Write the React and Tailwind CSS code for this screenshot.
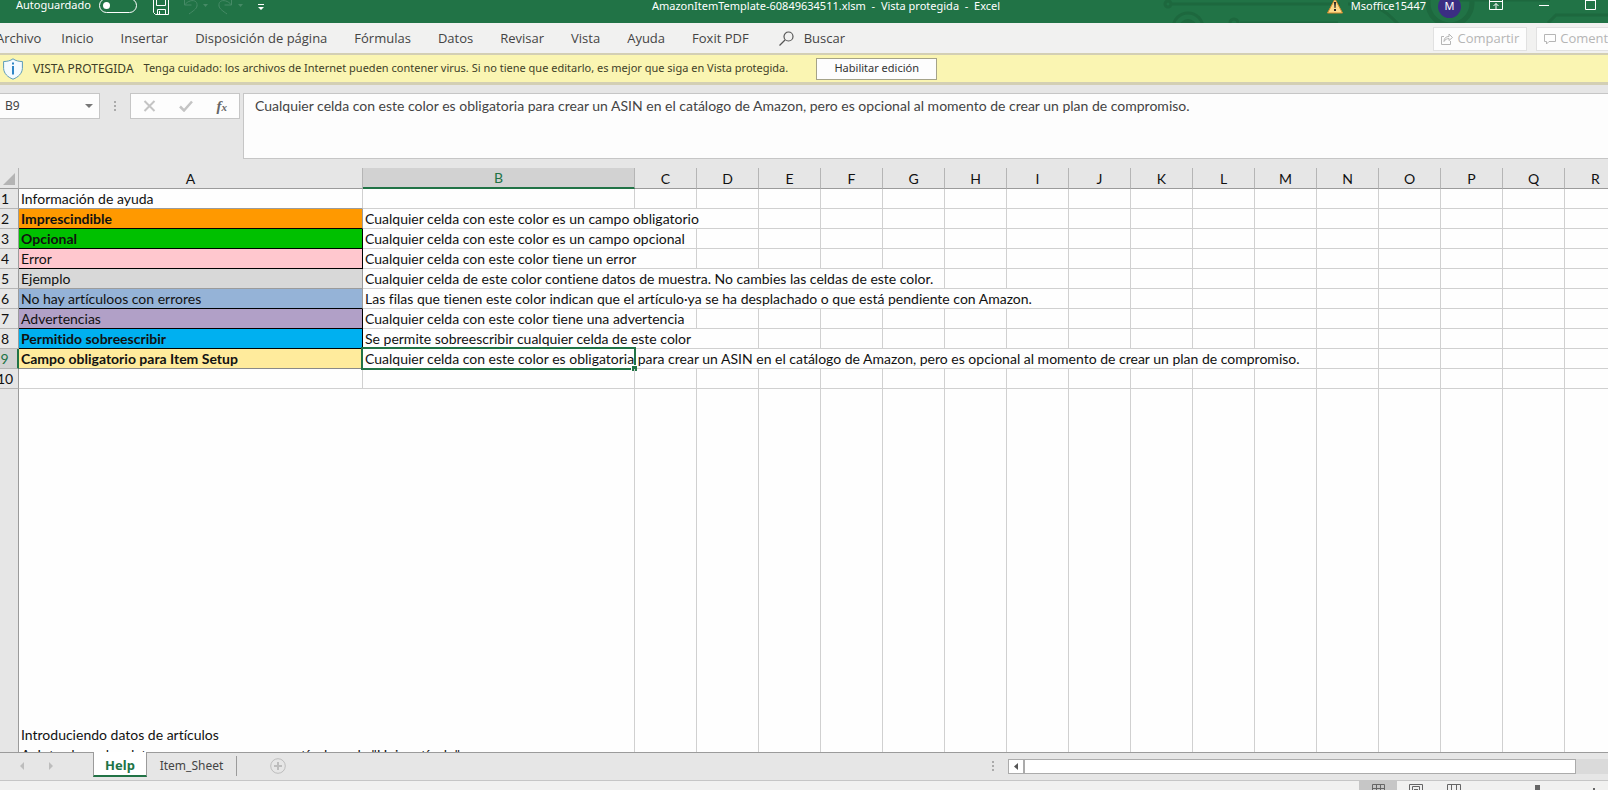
import React, { useState } from "react";

const menuTabs = ["Inicio", "Insertar", "Disposición de página", "Fórmulas", "Datos", "Revisar", "Vista", "Ayuda", "Foxit PDF"];

const columns = ["C", "D", "E", "F", "G", "H", "I", "J", "K", "L", "M", "N", "O", "P", "Q", "R"];

const longText =
  "Cualquier celda con este color es obligatoria para crear un ASIN en el catálogo de Amazon, pero es opcional al momento de crear un plan de compromiso.";

// span = how many columns the text of column B flows over
const rows = [
  { a: "Información de ayuda", aClass: "border-b-[#9b9b9b] border-r-[#d0d0d0]", b: "", span: 1 },
  { a: "Imprescindible", aClass: "bg-[#ff9900] font-bold border-b-black border-r-[#9b9b9b]", b: "Cualquier celda con este color es un campo obligatorio", span: 3 },
  { a: "Opcional", aClass: "bg-[#00c000] font-bold border-black", b: "Cualquier celda con este color es un campo opcional", span: 2 },
  { a: "Error", aClass: "bg-[#ffc7ce] border-black", b: "Cualquier celda con este color tiene un error", span: 2 },
  { a: "Ejemplo", aClass: "bg-[#d8d8d8] border-[#9b9b9b]", b: "Cualquier celda de este color contiene datos de muestra. No cambies las celdas de este color.", span: 6 },
  { a: "No hay artículoos con errores", aClass: "bg-[#95b3d7] border-b-black border-r-[#9b9b9b]", b: "Las filas que tienen este color indican que el artículo·ya se ha desplachado o que está pendiente con Amazon.", span: 8 },
  { a: "Advertencias", aClass: "bg-[#b1a0c7] border-black", b: "Cualquier celda con este color tiene una advertencia", span: 2 },
  { a: "Permitido sobreescribir", aClass: "bg-[#00b0f0] font-bold border-black", b: "Se permite sobreescribir cualquier celda de este color", span: 3 },
  { a: "Campo obligatorio para Item Setup", aClass: "bg-[#ffeb9c] font-bold border-[#8a8a8a]", b: longText, span: 12, selected: true },
  { a: "", aClass: "border-[#d0d0d0]", b: "", span: 1 },
];

const TitleBar = () => {
  const [autoSave, setAutoSave] = useState(false);

  return (
    <header className="relative flex h-[23px] shrink-0 items-center justify-between overflow-hidden bg-[#217346] text-[11px] text-white">
      <svg className="absolute top-0 right-0 h-[23px] w-[448px]" viewBox="0 0 448 23" fill="none" stroke="#1d683e" strokeWidth="3">
        <circle cx="8" cy="4" r="3" />
        <path d="M12 4h168" />
        <circle cx="28" cy="28" r="15" />
        <circle cx="28" cy="28" r="7" strokeWidth="4" />
        <circle cx="74" cy="23" r="4" />
        <path d="M80 23h98M188 4c22 0 32 2 44 14l8 8" />
        <circle cx="290" cy="3" r="22" strokeWidth="5" />
        <path d="M388 23l8-8h52M300 0h90" />
      </svg>

      <div className="relative flex h-full items-center pl-4">
        <label htmlFor="autosave" className="-mt-3">Autoguardado</label>
        <div className="relative ml-2 -mt-3 h-[15px] w-[38px]">
          <input
            id="autosave"
            type="checkbox"
            checked={autoSave}
            onChange={() => setAutoSave(!autoSave)}
            className="peer block h-[15px] w-[38px] appearance-none rounded-full border border-white"
          />
          <span className="pointer-events-none absolute top-1 left-1 size-[7px] rounded-full bg-white peer-checked:left-6" />
        </div>
        <button aria-label="Guardar" className="ml-4">
          <svg className="block h-[23px] w-4" viewBox="0 0 16 23" fill="none" stroke="#fff">
            <path d="M.5-1v13.500l2 2h13V-1M3.500-1v6.500h9V-1M4.500 14.500v-5h8v5M6.500 11v3" />
          </svg>
        </button>
        <button aria-label="Deshacer" className="ml-3">
          <svg className="block h-[23px] w-7" viewBox="0 0 28 23" fill="none" stroke="#468a66">
            <path d="M3.500-1v6h7M3.500 5C8-1 17-1 16 6c-.5 3-4 5-8 8" />
            <path d="M22 4h5l-2.500 3z" fill="#468a66" stroke="none" />
          </svg>
        </button>
        <button aria-label="Rehacer" className="ml-2">
          <svg className="block h-[23px] w-7" viewBox="0 0 28 23" fill="none" stroke="#468a66">
            <path d="M14.500-1v6h-7M14.500 5C10-1 1-1 2 6c.5 3 4 5 8 8" />
            <path d="M21 4h5l-2.500 3z" fill="#468a66" stroke="none" />
          </svg>
        </button>
        <button aria-label="Personalizar barra" className="ml-3">
          <svg className="block h-[23px] w-2" viewBox="0 0 8 23" fill="#fff">
            <path d="M1 4h6v1H1zM1 7h6L4 10z" />
          </svg>
        </button>
      </div>

      <h1 className="absolute inset-x-0 top-0 -mt-1 pl-11 text-center leading-5 whitespace-pre">
        AmazonItemTemplate-60849634511.xlsm  -  Vista protegida  -  Excel
      </h1>

      <div className="relative flex h-full items-start">
        <svg className="h-[14px] w-4" viewBox="0 0 16 14">
          <path d="M8-1L15.500 13H.5z" fill="#fbd989" stroke="#d88a2c" />
          <path d="M7 2h2l-.5 6h-1zM7 9h2v2H7z" fill="#222" />
        </svg>
        <span className="ml-2 -mt-1 leading-5">Msoffice15447</span>
        <span className="-mt-[5px] ml-3 flex size-[23px] items-center justify-center rounded-full bg-[#3b2e83]">M</span>
        <button aria-label="Opciones de cinta" className="ml-7">
          <svg className="block h-3 w-[14px]" viewBox="0 0 14 12" fill="none" stroke="#fff">
            <path d="M.5-1v10.500h13V-1M0 1.500h14M7 9V3.500M4.500 6L7 3.500 9.500 6" />
          </svg>
        </button>
        <button aria-label="Minimizar" className="ml-9">
          <svg className="block h-3 w-[10px]" viewBox="0 0 10 12" stroke="#fff">
            <path d="M0 5.500h10" />
          </svg>
        </button>
        <button aria-label="Maximizar" className="mr-3 ml-9">
          <svg className="block h-3 w-[11px]" viewBox="0 0 11 12" fill="none" stroke="#fff">
            <path d="M.5 0v9.500h10V0M.5.5h10" />
          </svg>
        </button>
      </div>
    </header>
  );
};

const Ribbon = () => (
  <div className="flex h-[30px] shrink-0 items-center justify-between overflow-hidden bg-[#f1f1f0] pt-px font-['Open_Sans',sans-serif] text-[13px] text-[#444]">
    <nav className="-ml-1 flex items-center whitespace-nowrap">
      <a href="#archivo" className="mr-5">Archivo</a>
      <div className="flex gap-[27px]">
        {menuTabs.map((tab) => (
          <a key={tab} href={`#${tab}`}>{tab}</a>
        ))}
      </div>
      <button className="ml-[30px] flex items-center gap-[10px]">
        <svg className="size-[15px]" viewBox="0 0 15 15" fill="none" stroke="#555" strokeWidth="1.200">
          <circle cx="9.500" cy="5.500" r="4.500" />
          <path d="M6 9l-5.500 5.500" />
        </svg>
        Buscar
      </button>
    </nav>
    <div className="-mr-[38px] flex gap-[9px] text-[#b5b5b5]">
      <button className="flex h-6 items-center gap-1 border border-[#e1e1e1] bg-[#fdfdfd] px-[7px]">
        <svg className="size-3" viewBox="0 0 12 12" fill="none" stroke="#b5b5b5">
          <path d="M3 3.500H.5v8h9V8M3 8.500C3 5 5 3.500 8 3.500V1l3.500 3.500L8 7.500V5.500C6 5.500 4 6.500 3 8.500z" />
        </svg>
        Compartir
      </button>
      <button className="flex h-6 items-center gap-1 border border-[#e1e1e1] bg-[#fdfdfd] px-[7px]">
        <svg className="size-3" viewBox="0 0 12 12" fill="none" stroke="#b5b5b5">
          <path d="M.5 1.500h11v7H5l-2.500 2.500V8.500h-2z" />
        </svg>
        Comentarios
      </button>
    </div>
  </div>
);

const ProtectedBar = () => (
  <div className="flex h-8 shrink-0 items-center border-t-2 border-b-3 border-[#d3cfb4] bg-[#faf5b2] pl-[3px] text-[#3f3f28]">
    <svg className="h-[22px] w-5 shrink-0" viewBox="0 0 20 22" fill="#f4fbff" stroke="#5b9bb8">
      <path d="M10 .8C7.500 2.800 4 3.500.6 3.500v7C1 15.500 4.500 19 10 21.200c5.500-2.200 9-5.700 9.400-10.700v-7C16 3.500 12.500 2.800 10 .8z" />
      <path d="M10 8v8.500M10 4.500v2" stroke="#2f86c6" strokeWidth="2" />
    </svg>
    <span className="ml-[10px] text-xs whitespace-nowrap">VISTA PROTEGIDA</span>
    <span className="ml-[10px] text-[11px] whitespace-nowrap">
      Tenga cuidado: los archivos de Internet pueden contener virus. Si no tiene que editarlo, es mejor que siga en Vista protegida.
    </span>
    <button className="ml-7 h-[22px] w-[121px] border border-[#a5a389] bg-[#fdfdfd] text-[11px] text-[#333]">Habilitar edición</button>
  </div>
);

const FormulaBar = () => (
  <div className="flex h-[83px] shrink-0 items-start bg-[#e6e6e6] pt-2">
    <div className="flex h-[26px] w-[100px] items-center border border-l-0 border-[#c6c6c6] bg-[#fdfdfd] pr-[6px] pl-[5px]">
      <input aria-label="Cuadro de nombres" defaultValue="B9" className="w-full min-w-0 text-xs text-[#444] outline-none" />
      <svg className="h-1 w-2 shrink-0" viewBox="0 0 8 4" fill="#777">
        <path d="M0 0h8L4 4z" />
      </svg>
    </div>
    <svg className="mx-[14px] mt-2 h-[11px] w-[2px]" viewBox="0 0 2 11" fill="#aaa">
      <path d="M0 0h2v2H0zM0 4h2v2H0zM0 8h2v2H0z" />
    </svg>
    <div className="flex h-[26px] w-[110px] items-center justify-between border border-[#c6c6c6] bg-[#fdfdfd] px-3">
      <button aria-label="Cancelar">
        <svg className="h-3 w-[13px]" viewBox="0 0 13 12" stroke="#c4c4c4" strokeWidth="2">
          <path d="M1.500 1l10 10M11.500 1l-10 10" />
        </svg>
      </button>
      <button aria-label="Introducir">
        <svg className="h-3 w-[14px]" viewBox="0 0 14 12" fill="none" stroke="#c4c4c4" strokeWidth="2.500">
          <path d="M1 6.500l4 4L13 1.500" />
        </svg>
      </button>
      <button className="font-['Liberation_Serif',serif] text-[15px] leading-5 font-bold text-[#666] italic">
        f<span className="text-[11px]">x</span>
      </button>
    </div>
    <div className="ml-[3px] h-[66px] flex-1 border border-r-0 border-[#c6c6c6] bg-[#fdfdfd]">
      <textarea
        aria-label="Barra de fórmulas"
        defaultValue={longText}
        className="block h-full w-full resize-none px-[11px] pt-[2px] font-['Lato',sans-serif] text-[14px] leading-5 text-[#444] outline-none [font-variant-ligatures:none]"
      />
    </div>
  </div>
);

const headCell = "border-r border-b border-r-[#b5b5b5] border-b-[#9b9b9b] p-0 pt-[2px] text-center font-normal";
const gridCell = "border-r border-b border-[#d0d0d0] p-0";

const Sheet = () => (
  <main className="min-h-0 flex-1 overflow-hidden bg-[#fefefe]">
    <table className="-ml-2 w-[1635px] table-fixed border-separate border-spacing-0 font-['Lato',sans-serif] text-[14px] leading-[18px] text-[#111] [font-variant-ligatures:none]">
      <colgroup>
        <col className="w-[27px]" />
        <col className="w-[344px]" />
        <col className="w-[272px]" />
        {columns.map((c) => (
          <col key={c} className="w-[62px]" />
        ))}
      </colgroup>
      <thead>
        <tr className="h-[21px] bg-[#e6e6e6]">
          <th className={headCell}>
            <svg aria-label="Seleccionar todo" className="ml-[11px] size-3" viewBox="0 0 12 12" fill="#b4b4b4">
              <path d="M12 0v12H0z" />
            </svg>
          </th>
          <th className={headCell}>A</th>
          <th className="border-r border-b-2 border-r-[#b5b5b5] border-b-[#217346] bg-[#d2d2d2] p-0 pt-px text-center font-normal text-[#217346]">B</th>
          {columns.map((c) => (
            <th key={c} className={headCell}>{c}</th>
          ))}
        </tr>
      </thead>
      <tbody>
        {rows.map((row, i) => (
          <tr key={i} className="h-5">
            <th
              className={
                row.selected
                  ? "border-r-2 border-b border-r-[#217346] border-b-[#b5b5b5] bg-[#d2d2d2] p-0 text-center font-normal text-[#217346]"
                  : "border-r border-b border-r-[#9b9b9b] border-b-[#b5b5b5] bg-[#e6e6e6] p-0 text-center font-normal"
              }
            >
              {i + 1}
            </th>
            <td className={`border-r border-b p-0 pl-[2px] whitespace-nowrap ${row.aClass}`}>{row.a}</td>
            <td colSpan={row.span} className={`${gridCell} relative pl-[2px] whitespace-nowrap`}>
              {row.b}
              {row.selected && (
                <span className="absolute -top-[2px] -left-[2px] h-[23px] w-[275px] border-2 border-[#217346]">
                  <span className="absolute -right-[3px] -bottom-[3px] size-[6px] border-t border-l border-white bg-[#217346]" />
                </span>
              )}
            </td>
            {columns.slice(row.span - 1).map((c) => (
              <td key={c} className={gridCell} />
            ))}
          </tr>
        ))}
        <tr className="h-[545px]">
          <th className="border-r border-[#9b9b9b] bg-[#e6e6e6] p-0" />
          <td colSpan={2} className="border-r border-[#d0d0d0] p-0 pt-[336px] pl-[2px] align-top leading-5">
            <p>Introduciendo datos de artículos</p>
            <p>A. Introduzca los datos para crear un nuevo artículo en la "Hoja artículo"</p>
          </td>
          {columns.map((c) => (
            <td key={c} className="border-r border-[#d0d0d0]" />
          ))}
        </tr>
      </tbody>
    </table>
  </main>
);

const SheetTabs = () => (
  <div className="flex h-[29px] shrink-0 items-start border-y border-t-[#9b9b9b] border-b-[#c6c6c6] bg-[#e6e6e6] text-xs">
    <button aria-label="Anterior" className="mt-[9px] ml-5">
      <svg className="block h-2 w-1" viewBox="0 0 4 8" fill="#bdbdbd"><path d="M4 0v8L0 4z" /></svg>
    </button>
    <button aria-label="Siguiente" className="mt-[9px] ml-[25px]">
      <svg className="block h-2 w-1" viewBox="0 0 4 8" fill="#bdbdbd"><path d="M0 0v8l4-4z" /></svg>
    </button>
    <button className="-mt-px ml-10 h-[25px] w-[54px] border-x border-b-2 border-x-[#9b9b9b] border-b-[#217346] bg-white pt-1 text-[13px] font-bold text-[#217346]">
      Help
    </button>
    <button className="mt-[3px] h-5 w-[90px] border-r border-[#9b9b9b] text-[#444]">Item_Sheet</button>
    <button aria-label="Hoja nueva" className="mt-[5px] ml-[33px]">
      <svg className="block size-4" viewBox="0 0 16 16" fill="none" stroke="#bdbdbd">
        <circle cx="8" cy="8" r="7.300" />
        <path d="M8 4v8M4 8h8" strokeWidth="2" />
      </svg>
    </button>
    <div className="ml-auto flex w-[616px] items-start pt-[6px]">
      <svg className="mt-[2px] mr-[14px] h-[10px] w-[2px]" viewBox="0 0 2 10" fill="#aaa">
        <path d="M0 0h2v2H0zM0 4h2v2H0zM0 8h2v2H0z" />
      </svg>
      <div className="flex h-[15px] flex-1 bg-[#dadada]">
        <button aria-label="Desplazar a la izquierda" className="flex w-[15px] items-center justify-center border border-r-0 border-[#ababab] bg-white">
          <svg className="h-[7px] w-1" viewBox="0 0 4 7" fill="#555"><path d="M4 0v7L0 3.500z" /></svg>
        </button>
        <div className="mr-8 flex-1 border border-l-2 border-[#ababab] bg-white" />
      </div>
    </div>
  </div>
);

const StatusBar = () => (
  <footer className="flex h-[9px] shrink-0 items-start justify-end overflow-hidden bg-[#f1f1f0]">
    <button aria-label="Normal" className="flex h-[9px] w-[38px] items-start justify-center bg-[#c6c6c6] pt-[3px]">
      <svg className="h-[14px] w-[13px] shrink-0" viewBox="0 0 13 14" fill="none" stroke="#666">
        <path d="M.5.5h12v12H.5zM4.500 0v13M8.500 0v13M0 4.500h13M0 8.500h13" />
      </svg>
    </button>
    <button aria-label="Diseño de página" className="flex h-[9px] w-[38px] items-start justify-center pt-[3px]">
      <svg className="h-[14px] w-[14px] shrink-0" viewBox="0 0 14 14" fill="none" stroke="#666">
        <path d="M.5.5h13v13H.5zM3.500 14V2.500h7V14M5 5.500h4" />
      </svg>
    </button>
    <button aria-label="Vista previa de salto" className="flex h-[9px] w-[38px] items-start justify-center pt-[3px]">
      <svg className="h-[14px] w-[14px] shrink-0" viewBox="0 0 14 14" fill="none" stroke="#666">
        <path d="M.5.5h13v13H.5zM4.500 0v8M9.500 0v8" />
      </svg>
    </button>
    <svg className="mr-[10px] ml-[62px] h-[9px] w-[63px] shrink-0" viewBox="0 0 63 9" fill="#666">
      <path d="M0 4h5v5H0zM58 7h2v2h-2z" />
    </svg>
  </footer>
);

const App = () => (
  <div className="flex h-screen flex-col overflow-hidden bg-[#e6e6e6] font-['Noto_Sans',sans-serif]">
    <TitleBar />
    <Ribbon />
    <ProtectedBar />
    <FormulaBar />
    <Sheet />
    <SheetTabs />
    <StatusBar />
  </div>
);

export default App;
